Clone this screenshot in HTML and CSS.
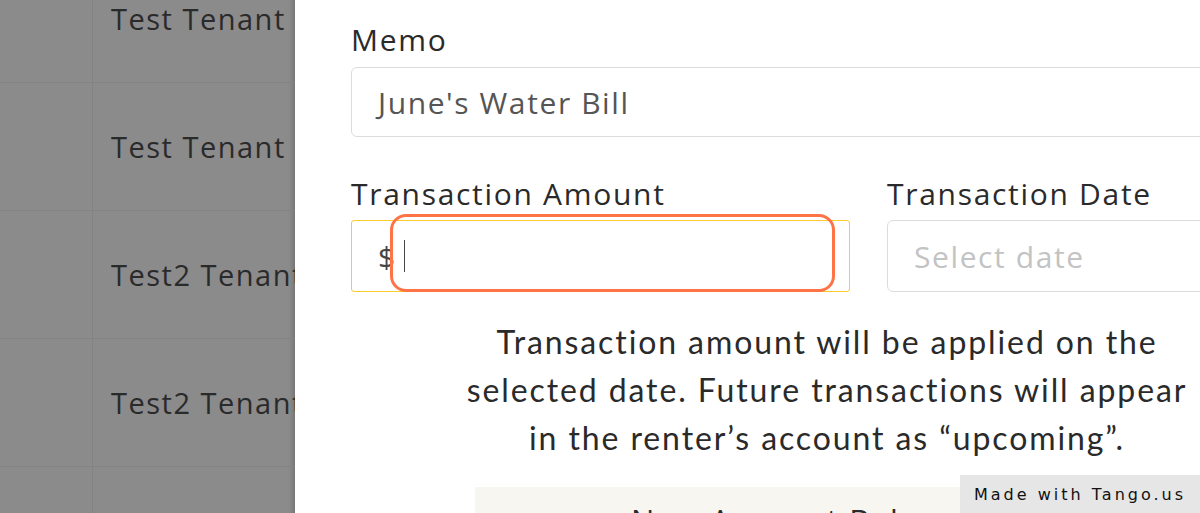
FILE: index.html
```
<!DOCTYPE html>
<html>
<head>
<meta charset="utf-8">
<link rel="stylesheet" href="styles.css">
</head>
<body>
<div class="page">
  <div class="backdrop">
    <div class="table">
      <div class="row"><div class="c1"></div><div class="c2">Test Tenant</div></div>
      <div class="row"><div class="c1"></div><div class="c2">Test Tenant</div></div>
      <div class="row"><div class="c1"></div><div class="c2">Test2 Tenant</div></div>
      <div class="row"><div class="c1"></div><div class="c2">Test2 Tenant</div></div>
      <div class="row"><div class="c1"></div><div class="c2"></div></div>
    </div>
  </div>
  <div class="panel">
    <div class="field">
      <div class="label">Memo</div>
      <div class="input memo">June's Water Bill</div>
    </div>
    <div class="pair">
      <div class="field">
        <div class="label">Transaction Amount</div>
        <div class="input amount"><span class="dollar">$</span><span class="cursor"></span></div>
      </div>
      <div class="field">
        <div class="label">Transaction Date</div>
        <div class="input date">Select date</div>
      </div>
    </div>
    <p class="note">Transaction amount will be applied on the selected date. Future transactions will appear in the renter’s account as “upcoming”.</p>
    <div class="balance">New Account Balance</div>
    <div class="highlight"></div>
  </div>
</div>
<div class="tango">Made with Tango.us</div>
</body>
</html>
```
FILE: styles.css
```
html, body {
  margin: 0;
  padding: 0;
  width: 1200px;
  height: 513px;
  overflow: hidden;
  background: #fff;
}
.page {
  display: flex;
  width: 1200px;
  height: 513px;
  font-family: "Open Sans", "Noto Sans", sans-serif;
}
.backdrop {
  width: 295px;
  flex: none;
  background: #8b8b8b;
  overflow: hidden;
  box-shadow: inset -6px 0 5px -4px rgba(0,0,0,0.18);
}
.table {
  margin-top: -45px;
}
.row {
  display: flex;
  height: 127px;
  border-bottom: 1px solid #838383;
}
.c1 {
  width: 92px;
  flex: none;
  border-right: 1px solid #838383;
}
.c2 {
  padding-left: 18px;
  display: flex;
  align-items: center;
  white-space: nowrap;
  font-size: 29px;
  color: #2a2a2a;
  letter-spacing: 1.5px;
}
.panel {
  flex: 1;
  position: relative;
  padding: 22px 0 0 56px;
  overflow: hidden;
}
.field {
  display: flex;
  flex-direction: column;
}
.label {
  font-size: 30px;
  line-height: 36px;
  height: 36px;
  color: #2a2a2a;
  margin-bottom: 9px;
  letter-spacing: 1.7px;
  white-space: nowrap;
}
.input {
  box-sizing: border-box;
  height: 70px;
  border: 1px solid #dcdcdc;
  border-radius: 6px;
  display: flex;
  align-items: center;
  padding-left: 26px;
  font-size: 30px;
  letter-spacing: 1.6px;
  white-space: nowrap;
}
.memo {
  width: 1040px;
  color: #555;
}
.pair {
  display: flex;
  gap: 37px;
  margin-top: 39px;
}
.pair .label {
  margin-bottom: 8px;
}
.pair .field {
  width: 499px;
  flex: none;
}
.pair .input {
  height: 72px;
}
.amount {
  border: 1.5px solid #fccc2c;
  border-radius: 3px;
  color: #444;
}
.dollar {
  margin-right: 7px;
}
.cursor {
  display: inline-block;
  width: 1.5px;
  height: 32px;
  background: #444;
}
.date {
  color: #c3c3c3;
}
.note {
  width: 730px;
  margin: 26px 0 0 111px;
  text-align: center;
  font-family: "Lato", sans-serif;
  font-size: 32px;
  line-height: 48px;
  letter-spacing: 1.9px;
  color: #2a2a2a;
}
.balance {
  margin: 25px 0 0 124px;
  width: 700px;
  height: 80px;
  background: #f7f6f0;
  box-sizing: border-box;
  padding: 12px 0 0 156px;
  font-size: 31px;
  letter-spacing: 1.7px;
  color: #2a2a2a;
  white-space: nowrap;
}
.highlight {
  position: absolute;
  left: 95px;
  top: 214px;
  width: 445px;
  height: 78px;
  box-sizing: border-box;
  border: 3px solid #ff7447;
  border-radius: 16px;
}
.tango {
  position: fixed;
  right: 0;
  bottom: 0;
  width: 240px;
  height: 38px;
  background: #e6e6e6;
  display: flex;
  align-items: center;
  justify-content: center;
  font-family: "DejaVu Sans", sans-serif;
  font-size: 16px;
  letter-spacing: 3px;
  color: #111;
}
```
